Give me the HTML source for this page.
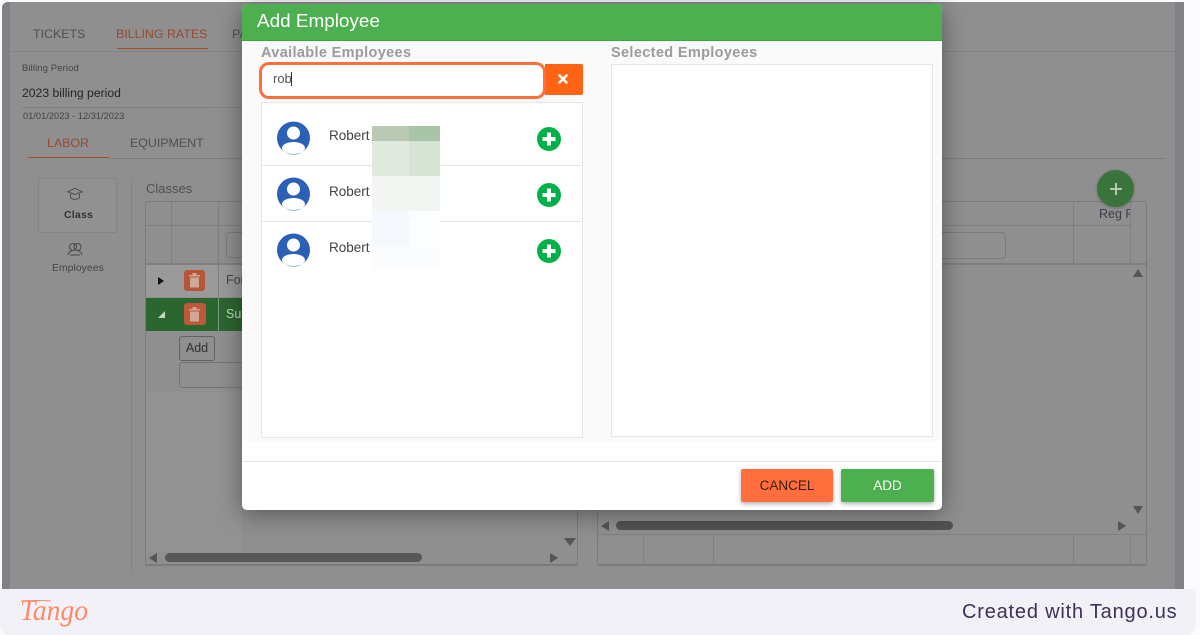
<!DOCTYPE html>
<html><head><meta charset="utf-8"><style>
html,body{margin:0;padding:0;width:1200px;height:635px;overflow:hidden;background:#fbfaff;font-family:"Liberation Sans",sans-serif}
.a{position:absolute}
.t{position:absolute;white-space:nowrap}
.l{position:absolute;background:#7f7f7f}
.ava{position:absolute;left:277px;width:33px;height:34px}
.plus{position:absolute;left:537px;width:24px;height:24px}
.rob{position:absolute;left:329px;font-size:13.5px;color:#444;line-height:16px}
</style></head><body>
<div class="a" style="left:0;top:0;width:1200px;height:635px;overflow:hidden;background:#fbfaff">
<!-- app -->
<div class="a" style="left:2px;top:2px;width:1182px;height:590px;background:#8f8f8f;border-radius:6px 0 0 0;overflow:hidden">
 <div class="a" style="left:0;top:0;width:8px;height:590px;background:#818185"></div>
 <div class="a" style="right:0;top:0;width:9px;height:590px;background:#818185"></div>
</div>
<div class="t" style="left:33px;top:27px;font-size:12.4px;color:#505050">TICKETS</div>
<div class="t" style="left:116px;top:27px;font-size:12.4px;color:#964a30">BILLING RATES</div>
<div class="a" style="left:117px;top:48px;width:91px;height:1px;background:#a34a28"></div>
<div class="t" style="left:232px;top:27px;font-size:12.4px;color:#505050">PA</div>
<div class="l" style="left:10px;top:51px;width:1165px;height:1px;background:#838383"></div>
<div class="t" style="left:22px;top:63px;font-size:9.5px;color:#444;letter-spacing:.1px">Billing Period</div>
<div class="t" style="left:22px;top:86px;font-size:12.2px;color:#262626">2023 billing period</div>
<div class="l" style="left:22px;top:107px;width:220px;height:1px;background:#808080"></div>
<div class="t" style="left:23px;top:111px;font-size:9.3px;color:#444">01/01/2023 - 12/31/2023</div>
<div class="t" style="left:47px;top:136px;font-size:12.4px;color:#964a30">LABOR</div>
<div class="t" style="left:130px;top:136px;font-size:12.4px;color:#505050">EQUIPMENT</div>
<div class="a" style="left:28px;top:157px;width:81px;height:1px;background:#a34a28"></div>
<div class="l" style="left:109px;top:158px;width:1057px;height:1px;background:#7d7d7d"></div>
<!-- sidebar -->
<div class="a" style="left:38px;top:178px;width:79px;height:55px;background:#919191;border:1px solid #848484;box-sizing:border-box"></div>
<svg class="a" style="left:67px;top:187px" width="16" height="15" viewBox="0 0 18 16" fill="none" stroke="#484848" stroke-width="1"><path d="M1 5 L9 1 L17 5 L9 8 Z"/><path d="M4 7 V12 Q9 15 14 12 V7"/></svg>
<div class="t" style="left:64px;top:209px;font-size:10.5px;font-weight:bold;color:#343434;letter-spacing:.2px">Class</div>
<svg class="a" style="left:67px;top:242px" width="16" height="14" viewBox="0 0 16 14" fill="none" stroke="#484848" stroke-width="1"><circle cx="6" cy="5" r="3.5"/><circle cx="10.5" cy="5" r="3.5"/><path d="M1 13 Q2 9 5 9 M15 13 Q14 9 11 9 M3 13 H13"/></svg>
<div class="t" style="left:52px;top:263px;font-size:10.3px;color:#444;letter-spacing:.1px">Employees</div>
<div class="l" style="left:131px;top:178px;width:1px;height:396px;background:#838383"></div>
<div class="t" style="left:146px;top:181px;font-size:13px;color:#505050">Classes</div>
<!-- left grid -->
<div class="a" style="left:145px;top:201px;width:433px;height:365px;border:1px solid #7b7b7b;border-bottom-width:2px;box-sizing:border-box;border-radius:3px 3px 2px 2px"></div>
<div class="l" style="left:146px;top:225px;width:96px;height:1px"></div>
<div class="l" style="left:146px;top:263px;width:96px;height:2px"></div>
<div class="l" style="left:171px;top:202px;width:1px;height:61px"></div>
<div class="l" style="left:218px;top:202px;width:1px;height:130px"></div>
<div class="a" style="left:226px;top:232px;width:20px;height:26px;border:1px solid #7b7b7b;border-radius:4px;box-sizing:border-box"></div>
<div class="a" style="left:146px;top:265px;width:96px;height:32px;background:#9a9a9a"></div>
<div class="l" style="left:218px;top:265px;width:1px;height:32px"></div>
<div class="a" style="left:146px;top:298px;width:96px;height:33px;background:#2c662f"></div>
<div class="l" style="left:218px;top:298px;width:1px;height:33px;background:#7d9c7f"></div>
<div class="a" style="left:158px;top:277px;width:0;height:0;border-left:6px solid #111;border-top:4px solid transparent;border-bottom:4px solid transparent"></div>
<div class="a" style="left:158px;top:311px;width:0;height:0;border-right:7px solid #c9d6ca;border-top:7px solid transparent"></div>
<div class="a" style="left:184px;top:270px;width:21px;height:21px;background:#b5553a;border-radius:3px"></div>
<div class="a" style="left:184px;top:303px;width:22px;height:22px;background:#bd583a;border-radius:3px"></div>
<svg class="a" style="left:189px;top:273px" width="11" height="15" viewBox="0 0 11 15"><path d="M0 2H11V3.500H0Z M3.500 0H7.500V2H3.500Z" fill="#d0a898"/><path d="M1 4.500H10V14.500H1Z" fill="#d0a898"/></svg>
<svg class="a" style="left:189px;top:307px" width="11" height="15" viewBox="0 0 11 15"><path d="M0 2H11V3.500H0Z M3.500 0H7.500V2H3.500Z" fill="#d0a898"/><path d="M1 4.500H10V14.500H1Z" fill="#d0a898"/></svg>
<div class="t" style="left:226px;top:273px;font-size:12.5px;color:#444">For</div>
<div class="t" style="left:226px;top:307px;font-size:12.5px;color:#c8d8c8">Su</div>
<div class="a" style="left:179px;top:336px;width:36px;height:25px;border:1px solid #626262;border-radius:3px;box-sizing:border-box;font-size:12.5px;color:#303030;text-align:center;line-height:22px">Add</div>
<div class="a" style="left:179px;top:362px;width:64px;height:26px;border:1px solid #757575;border-right:0;border-radius:3px 0 0 3px;box-sizing:border-box"></div>
<div class="a" style="left:146px;top:392px;width:96px;height:160px;background:#929292"></div>
<div class="a" style="left:149px;top:553px;width:0;height:0;border-right:8px solid #555;border-top:5px solid transparent;border-bottom:5px solid transparent"></div>
<div class="a" style="left:165px;top:553px;width:257px;height:9px;background:#585858;border-radius:5px"></div>
<div class="a" style="left:550px;top:553px;width:0;height:0;border-left:8px solid #555;border-top:5px solid transparent;border-bottom:5px solid transparent"></div>
<div class="a" style="left:564px;top:538px;width:0;height:0;border-top:8px solid #555;border-left:6px solid transparent;border-right:6px solid transparent"></div>
<!-- right grid -->
<div class="a" style="left:597px;top:201px;width:550px;height:365px;border:1px solid #7b7b7b;border-bottom-width:2px;box-sizing:border-box;border-radius:3px"></div>
<div class="l" style="left:942px;top:225px;width:190px;height:1px"></div>
<div class="l" style="left:942px;top:263px;width:204px;height:2px"></div>
<div class="l" style="left:1073px;top:202px;width:1px;height:61px"></div>
<div class="l" style="left:1130px;top:202px;width:1px;height:61px"></div>
<div class="a" style="left:940px;top:232px;width:66px;height:27px;border:1px solid #7b7b7b;border-left:0;border-radius:0 4px 4px 0;box-sizing:border-box"></div>
<div class="a" style="left:1097px;top:170px;width:37px;height:37px;border-radius:50%;background:#3a733c;box-shadow:0 1px 3px rgba(0,0,0,.25)"></div>
<div class="a" style="left:1110px;top:188px;width:12px;height:2px;background:#b5c8b6"></div>
<div class="a" style="left:1115px;top:183px;width:2px;height:12px;background:#b5c8b6"></div>
<div class="a" style="left:1099px;top:206px;width:31px;height:16px;overflow:hidden;font-size:12.5px;color:#3a3e4c;white-space:nowrap;line-height:16px">Reg Rate</div>
<div class="a" style="left:1133px;top:269px;width:0;height:0;border-bottom:8px solid #555;border-left:5px solid transparent;border-right:5px solid transparent"></div>
<div class="a" style="left:1133px;top:506px;width:0;height:0;border-top:8px solid #555;border-left:5px solid transparent;border-right:5px solid transparent"></div>
<div class="a" style="left:1118px;top:521px;width:0;height:0;border-left:8px solid #555;border-top:5px solid transparent;border-bottom:5px solid transparent"></div>
<div class="a" style="left:601px;top:521px;width:0;height:0;border-right:8px solid #555;border-top:5px solid transparent;border-bottom:5px solid transparent"></div>
<div class="a" style="left:616px;top:521px;width:337px;height:9px;background:#525252;border-radius:5px"></div>
<div class="l" style="left:597px;top:534px;width:550px;height:1px"></div>
<div class="l" style="left:643px;top:534px;width:1px;height:30px"></div>
<div class="l" style="left:713px;top:534px;width:1px;height:30px"></div>
<div class="l" style="left:1073px;top:534px;width:1px;height:30px"></div>
<div class="l" style="left:1130px;top:534px;width:1px;height:30px"></div>
<!-- modal -->
<div class="a" style="left:242px;top:4px;width:700px;height:506px;background:#fff;border-radius:5px;box-shadow:0 4px 24px rgba(0,0,0,.4)"></div>
<div class="a" style="left:242px;top:4px;width:700px;height:37px;background:#4caf50;border-bottom:1px solid #37a83c;box-sizing:border-box;border-radius:5px 5px 0 0"></div>
<div class="t" style="left:257px;top:11px;font-size:18.9px;color:#fff;line-height:22px">Add Employee</div>
<div class="a" style="left:242px;top:41px;width:700px;height:400px;background:#fafafa"></div>
<div class="t" style="left:261px;top:45px;font-size:14.5px;letter-spacing:.35px;font-weight:bold;color:#9b9b9b;line-height:16px">Available Employees</div>
<div class="t" style="left:611px;top:45px;font-size:14.5px;letter-spacing:.35px;font-weight:bold;color:#9b9b9b;line-height:16px">Selected Employees</div>
<div class="a" style="left:545px;top:64px;width:38px;height:31px;background:#ff6314;border-radius:0 2px 2px 0"></div>
<svg class="a" style="left:558px;top:74px" width="10" height="10" viewBox="0 0 10 10"><path d="M1.500 1.500 L8.500 8.500 M8.500 1.500 L1.500 8.500" stroke="#fff" stroke-width="2.600" stroke-linecap="round"/></svg>
<div class="a" style="left:259px;top:62px;width:287px;height:37px;background:#fff;border:3px solid #ff6f3c;border-radius:10px;box-sizing:border-box"></div>
<div class="t" style="left:273px;top:71px;font-size:13px;color:#555;line-height:16px">rob</div>
<div class="a" style="left:291px;top:72px;width:1px;height:14px;background:#333"></div>
<div class="a" style="left:261px;top:102px;width:322px;height:336px;background:#fff;border:1px solid #e6e6e6;box-sizing:border-box"></div>
<div class="a" style="left:262px;top:165px;width:320px;height:1px;background:#e6e6e6"></div>
<div class="a" style="left:262px;top:221px;width:320px;height:1px;background:#e6e6e6"></div>
<svg class="ava" style="top:121px" viewBox="0 0 33 34"><circle cx="16.500" cy="17" r="16.500" fill="#2b60b8"/><circle cx="16.500" cy="12" r="6.500" fill="#fff"/><ellipse cx="16.500" cy="27" rx="11.500" ry="6" fill="#fff"/></svg>
<svg class="ava" style="top:177px" viewBox="0 0 33 34"><circle cx="16.500" cy="17" r="16.500" fill="#2b60b8"/><circle cx="16.500" cy="12" r="6.500" fill="#fff"/><ellipse cx="16.500" cy="27" rx="11.500" ry="6" fill="#fff"/></svg>
<svg class="ava" style="top:233px" viewBox="0 0 33 34"><circle cx="16.500" cy="17" r="16.500" fill="#2b60b8"/><circle cx="16.500" cy="12" r="6.500" fill="#fff"/><ellipse cx="16.500" cy="27" rx="11.500" ry="6" fill="#fff"/></svg>
<div class="rob" style="top:128px">Robert</div>
<div class="rob" style="top:184px">Robert</div>
<div class="rob" style="top:240px">Robert</div>
<svg class="plus" style="top:127px" viewBox="0 0 24 24"><circle cx="12" cy="12" r="12" fill="#00b14a"/><path d="M12 5.500V18.500M5.500 12H18.500" stroke="#fff" stroke-width="4"/></svg>
<svg class="plus" style="top:183px" viewBox="0 0 24 24"><circle cx="12" cy="12" r="12" fill="#00b14a"/><path d="M12 5.500V18.500M5.500 12H18.500" stroke="#fff" stroke-width="4"/></svg>
<svg class="plus" style="top:239px" viewBox="0 0 24 24"><circle cx="12" cy="12" r="12" fill="#00b14a"/><path d="M12 5.500V18.500M5.500 12H18.500" stroke="#fff" stroke-width="4"/></svg>
<!-- blur blocks -->
<div class="a" style="left:372px;top:126px;width:37px;height:15px;background:#bac9b3"></div>
<div class="a" style="left:409px;top:126px;width:31px;height:15px;background:#a9c4a6"></div>
<div class="a" style="left:372px;top:141px;width:37px;height:35px;background:#dfe9dd"></div>
<div class="a" style="left:409px;top:141px;width:31px;height:35px;background:#d6e5d3"></div>
<div class="a" style="left:372px;top:176px;width:37px;height:35px;background:#f3f6f3"></div>
<div class="a" style="left:409px;top:176px;width:31px;height:35px;background:#f2f6f2"></div>
<div class="a" style="left:372px;top:211px;width:37px;height:36px;background:#f5f9fe"></div>
<div class="a" style="left:409px;top:211px;width:31px;height:36px;background:#fbfdfe"></div>
<div class="a" style="left:372px;top:247px;width:68px;height:21px;background:#fafcfe"></div>
<div class="a" style="left:611px;top:64px;width:322px;height:373px;background:#fff;border:1px solid #e6e6e6;box-sizing:border-box"></div>
<div class="a" style="left:242px;top:461px;width:700px;height:1px;background:#e6e6e6"></div>
<div class="a" style="left:741px;top:469px;width:92px;height:33px;background:#ff6e3c;border-radius:2px;box-shadow:0 2px 4px rgba(0,0,0,.3);text-align:center;font-size:13.5px;line-height:34px;color:#3b1d12">CANCEL</div>
<div class="a" style="left:841px;top:469px;width:93px;height:33px;background:#4caf50;border-radius:2px;box-shadow:0 2px 4px rgba(0,0,0,.3);text-align:center;font-size:13.5px;line-height:34px;color:#f4fff4">ADD</div>
<!-- footer -->
<div class="a" style="left:0;top:589px;width:1196px;height:46px;background:#f3f1f8;border-radius:0 0 10px 10px"></div>
<svg class="a" style="left:18px;top:594px" width="76" height="38" viewBox="0 0 76 38"><path d="M3 7 Q18 6 33 7" stroke="#ff8a66" stroke-width="1" fill="none"/><text x="2" y="26" font-family="Liberation Serif" font-style="italic" font-size="30" fill="#ff8a66" textLength="68" lengthAdjust="spacingAndGlyphs">Tango</text></svg>
<div class="t" style="left:962px;top:600px;font-size:20px;line-height:24px;color:#3e2f5b;letter-spacing:.8px">Created with Tango.us</div>
</div>
</body></html>
